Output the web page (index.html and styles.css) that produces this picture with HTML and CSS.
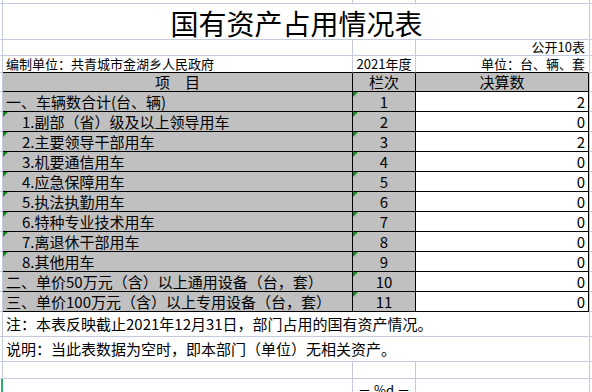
FILE: index.html
```html
<!DOCTYPE html>
<html lang="zh-CN">
<head>
<meta charset="utf-8">
<title>国有资产占用情况表</title>
<link rel="stylesheet" href="styles.css">
</head>
<body>
<div class="sheet">
  <!-- partial top row -->
  <div class="cell gut"></div><div class="cell"></div><div class="cell"></div><div class="cell tail"></div><div class="cell edge"></div>
  <!-- title -->
  <div class="cell gut"></div><div class="cell title span3 tail">国有资产占用情况表</div><div class="cell edge"></div>
  <!-- 公开10表 -->
  <div class="cell gut"></div><div class="cell"></div><div class="cell"></div><div class="cell tail small end right">公开10表</div><div class="cell edge"></div>
  <!-- 编制单位 -->
  <div class="cell gut"></div>
  <div class="cell small end topline">编制单位：共青城市金湖乡人民政府</div>
  <div class="cell small end ctr topline">2021年度</div>
  <div class="cell tail small end right topline">单位：台、辆、套</div>
  <div class="cell edge"></div>
  <!-- header -->
  <div class="cell gut"></div>
  <div class="cell tb gray ctr">项　目</div>
  <div class="cell tb gray ctr">栏次</div>
  <div class="cell tb gray ctr">决算数</div>
  <div class="cell edge"></div>
  <!-- data rows -->
  <div class="cell gut"></div><div class="cell tb gray">一、车辆数合计(台、辆)</div><div class="cell tb gray ctr mark">1</div><div class="cell tb right">2</div><div class="cell edge"></div>
  <div class="cell gut"></div><div class="cell tb gray ind mark">1.副部（省）级及以上领导用车</div><div class="cell tb gray ctr mark">2</div><div class="cell tb right">0</div><div class="cell edge"></div>
  <div class="cell gut"></div><div class="cell tb gray ind mark">2.主要领导干部用车</div><div class="cell tb gray ctr mark">3</div><div class="cell tb right">2</div><div class="cell edge"></div>
  <div class="cell gut"></div><div class="cell tb gray ind mark">3.机要通信用车</div><div class="cell tb gray ctr mark">4</div><div class="cell tb right">0</div><div class="cell edge"></div>
  <div class="cell gut"></div><div class="cell tb gray ind mark">4.应急保障用车</div><div class="cell tb gray ctr mark">5</div><div class="cell tb right">0</div><div class="cell edge"></div>
  <div class="cell gut"></div><div class="cell tb gray ind mark">5.执法执勤用车</div><div class="cell tb gray ctr mark">6</div><div class="cell tb right">0</div><div class="cell edge"></div>
  <div class="cell gut"></div><div class="cell tb gray ind mark">6.特种专业技术用车</div><div class="cell tb gray ctr mark">7</div><div class="cell tb right">0</div><div class="cell edge"></div>
  <div class="cell gut"></div><div class="cell tb gray ind mark">7.离退休干部用车</div><div class="cell tb gray ctr mark">8</div><div class="cell tb right">0</div><div class="cell edge"></div>
  <div class="cell gut"></div><div class="cell tb gray ind mark">8.其他用车</div><div class="cell tb gray ctr mark">9</div><div class="cell tb right">0</div><div class="cell edge"></div>
  <div class="cell gut"></div><div class="cell tb gray">二、单价50万元（含）以上通用设备（台，套）</div><div class="cell tb gray ctr mark">10</div><div class="cell tb right">0</div><div class="cell edge"></div>
  <div class="cell gut"></div><div class="cell tb gray">三、单价100万元（含）以上专用设备（台，套）</div><div class="cell tb gray ctr mark">11</div><div class="cell tb right">0</div><div class="cell edge"></div>
  <!-- notes -->
  <div class="cell gut"></div><div class="cell span3 tail">注：本表反映截止2021年12月31日，部门占用的国有资产情况。</div><div class="cell edge"></div>
  <div class="cell gut"></div><div class="cell span3 tail">说明：当此表数据为空时，即本部门（单位）无相关资产。</div><div class="cell edge"></div>
  <!-- empty -->
  <div class="cell gut"></div><div class="cell"></div><div class="cell"></div><div class="cell tail"></div><div class="cell edge"></div>
  <!-- footer -->
  <div class="cell gut active"></div><div class="cell"></div><div class="cell small ctr foot">－ %d －</div><div class="cell tail"></div><div class="cell edge"></div>
</div>
</body>
</html>
```
FILE: styles.css
```css
html, body {
  margin: 0;
  padding: 0;
  background: #ffffff;
  overflow: hidden;
}

body {
  width: 592px;
  height: 392px;
  font-family: "Noto Sans CJK SC", "Noto Sans", sans-serif;
  color: #000000;
}

.sheet {
  display: grid;
  grid-template-columns: 3px 350px 63px 173px 3px;
  grid-template-rows: 4px 36px 16px 17px 19px repeat(11, 20px) 25px 25px 17px 24px;
}

.cell {
  box-sizing: border-box;
  position: relative;
  display: flex;
  align-items: center;
  padding: 0 3px;
  border-right: 1px solid #c5c9dc;
  border-bottom: 1px solid #c5c9dc;
  font-size: 15px;
  line-height: 16px;
  white-space: nowrap;
}

.gut {
  padding: 0;
}

.active {
  border-right: 2px solid #2fae6a;
}

.edge {
  border-right: none;
  border-left: 1px solid #c5c9dc;
  padding: 0;
}

.tail {
  border-right-color: transparent;
}

.span3 {
  grid-column: span 3;
}

.title {
  justify-content: center;
  align-items: flex-end;
  font-size: 28px;
  line-height: 32px;
  padding-left: 5px;
}

.small {
  font-size: 13px;
  line-height: 14px;
}

.end {
  align-items: flex-end;
  padding-bottom: 1px;
}

.right {
  justify-content: flex-end;
}

.ctr {
  justify-content: center;
}

.topline {
  border-bottom-color: #000000;
}

.tb {
  border-right-color: #000000;
  border-bottom-color: #000000;
}

.gray {
  background: #c0c0c0;
}

.ind {
  padding-left: 19px;
}

.mark::before {
  content: "";
  position: absolute;
  top: 0;
  left: 0;
  border-top: 5px solid #128a1c;
  border-right: 5px solid transparent;
}

.foot {
  align-items: flex-start;
  padding-top: 4px;
}
```
